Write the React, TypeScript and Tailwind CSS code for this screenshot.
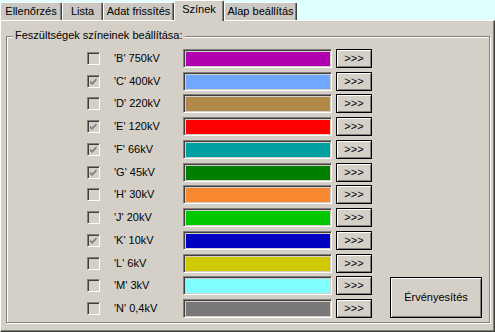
const tabs = [
  { label: 'Ellenőrzés', width: 'w-[62px]' },
  { label: 'Lista', width: 'w-[41px]' },
  { label: 'Adat frissítés', width: 'w-[71px]' },
  { label: 'Színek', width: 'w-[50px]', active: true },
  { label: 'Alap beállítás', width: 'w-[73px]' },
]

const rows = [
  { label: "'B' 750kV", color: 'bg-[#b000b0]', checked: false, h: 'h-[23px]' },
  { label: "'C' 400kV", color: 'bg-[#70a8ff]', checked: true, h: 'h-[22px]' },
  { label: "'D' 220kV", color: 'bg-[#b08848]', checked: false, h: 'h-[23px]' },
  { label: "'E' 120kV", color: 'bg-[#ff0000]', checked: true, h: 'h-[23px]' },
  { label: "'F' 66kV", color: 'bg-[#00a0a0]', checked: true, h: 'h-[23px]' },
  { label: "'G' 45kV", color: 'bg-[#008000]', checked: true, h: 'h-[22px]' },
  { label: "'H' 30kV", color: 'bg-[#f88830]', checked: false, h: 'h-[23px]' },
  { label: "'J' 20kV", color: 'bg-[#00c800]', checked: false, h: 'h-[23px]' },
  { label: "'K' 10kV", color: 'bg-[#0000c0]', checked: true, h: 'h-[23px]' },
  { label: "'L' 6kV", color: 'bg-[#d0c800]', checked: false, h: 'h-[22px]' },
  { label: "'M' 3kV", color: 'bg-[#80ffff]', checked: false, h: 'h-[23px]' },
  { label: "'N' 0,4kV", color: 'bg-[#787878]', checked: false, h: 'h-[23px]' },
]

function CheckBox({ checked }: { checked: boolean }) {
  return (
    <div className="w-[13px] h-[13px] shrink-0 border-t border-l border-[#808080] border-b-white border-r-white border-b border-r bg-[#d4d0c8] shadow-[inset_1px_1px_#404040]">
      {checked && (
        <svg width="11" height="11" viewBox="0 0 11 11">
          <polygon points="2,4.5 4,6.5 8.5,2 8.5,4.5 4,9 2,7" fill="#808080" />
        </svg>
      )}
    </div>
  )
}

export default function App() {
  return (
    <div className="w-[495px] h-[332px] bg-[#e0ffff] font-['Liberation_Sans',Arial,sans-serif] text-[11px] leading-[13px] text-black overflow-hidden">
      {/* Tabs */}
      <div className="relative z-10 flex h-[20px] items-end">
        {tabs.map((t) =>
          t.active ? (
            <div
              key={t.label}
              className={`${t.width} h-[21px] -mb-px flex justify-center pt-[2px] bg-[#d4d0c8] border-t border-l border-white border-r border-r-[#404040] shadow-[inset_-1px_0_#808080] rounded-t-[2px]`}
            >
              {t.label}
            </div>
          ) : (
            <div
              key={t.label}
              className={`${t.width} h-[18px] flex justify-center pt-[2px] bg-[#cbc8c1] border-t border-l border-white border-r border-r-[#404040] shadow-[inset_-1px_0_#808080] rounded-t-[2px]`}
            >
              {t.label}
            </div>
          )
        )}
      </div>

      {/* Page */}
      <div className="w-[495px] h-[312px] bg-[#d4d0c8] border-t border-l border-white border-r border-b border-r-[#404040] border-b-[#404040] shadow-[inset_-1px_-1px_#808080] pt-[15px] pl-[5px]">
        <div className="relative w-[484px] h-[287px] border border-[#808080] shadow-[inset_1px_1px_#fff,1px_1px_#fff] flex">
          <span className="absolute top-[-8px] left-[6px] px-[2px] bg-[#d4d0c8]">
            Feszültségek színeinek beállítása:
          </span>

          <div className="flex flex-col pt-[10px] pl-[80px]">
            {rows.map((r) => (
              <div key={r.label} className={`${r.h} flex items-center`}>
                <CheckBox checked={r.checked} />
                <span className="ml-[14px] w-[69px]">{r.label}</span>
                <div className="w-[149px] h-[19px] border-t border-l border-[#808080] border-b border-r border-b-white border-r-white shadow-[inset_1px_1px_#404040] p-px pl-[2px] pt-[2px]">
                  <div className={`w-full h-full ${r.color}`} />
                </div>
                <button className="ml-[4px] w-[36px] h-[19px] border border-black bg-[#d4d0c8] shadow-[inset_1px_1px_#fff,inset_-1px_-1px_#808080] flex items-center justify-center text-[11px] leading-none">
                  &gt;&gt;&gt;
                </button>
              </div>
            ))}
          </div>

          <div className="flex items-end pb-[4px] ml-[18px]">
            <button className="w-[92px] h-[41px] border border-black bg-[#d4d0c8] shadow-[inset_1px_1px_#fff,inset_-1px_-1px_#808080] flex items-center justify-center text-[11px]">
              Érvényesítés
            </button>
          </div>
        </div>
      </div>
    </div>
  )
}
